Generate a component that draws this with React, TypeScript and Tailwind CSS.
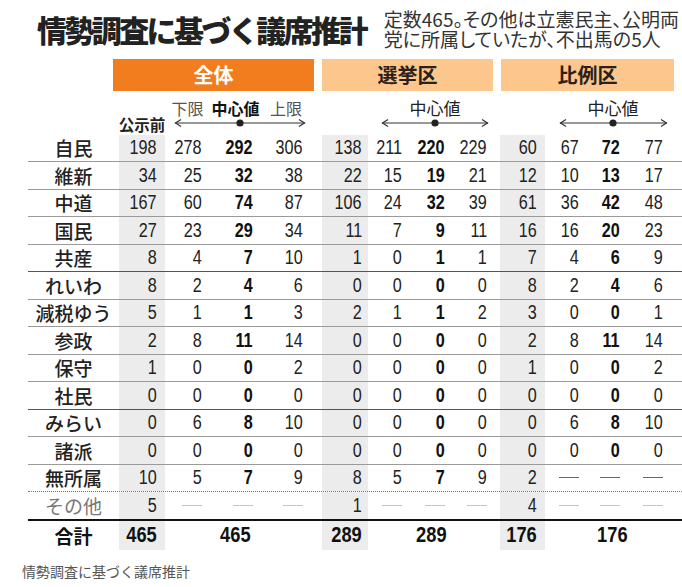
import React from "react";

type Cell = number | string;

const rows: { label: string; values: Cell[]; line: string }[] = [
  { label: "自民", values: [198, 278, 292, 306, 138, 211, 220, 229, 60, 67, 72, 77], line: "border-[#9a9a9a]" },
  { label: "維新", values: [34, 25, 32, 38, 22, 15, 19, 21, 12, 10, 13, 17], line: "border-[#9a9a9a]" },
  { label: "中道", values: [167, 60, 74, 87, 106, 24, 32, 39, 61, 36, 42, 48], line: "border-[#9a9a9a]" },
  { label: "国民", values: [27, 23, 29, 34, 11, 7, 9, 11, 16, 16, 20, 23], line: "border-[#9a9a9a]" },
  { label: "共産", values: [8, 4, 7, 10, 1, 0, 1, 1, 7, 4, 6, 9], line: "border-[#555]" },
  { label: "れいわ", values: [8, 2, 4, 6, 0, 0, 0, 0, 8, 2, 4, 6], line: "border-[#9a9a9a]" },
  { label: "減税ゆう", values: [5, 1, 1, 3, 2, 1, 1, 2, 3, 0, 0, 1], line: "border-[#9a9a9a]" },
  { label: "参政", values: [2, 8, 11, 14, 0, 0, 0, 0, 2, 8, 11, 14], line: "border-[#9a9a9a]" },
  { label: "保守", values: [1, 0, 0, 2, 0, 0, 0, 0, 1, 0, 0, 2], line: "border-[#9a9a9a]" },
  { label: "社民", values: [0, 0, 0, 0, 0, 0, 0, 0, 0, 0, 0, 0], line: "border-[#555]" },
  { label: "みらい", values: [0, 6, 8, 10, 0, 0, 0, 0, 0, 6, 8, 10], line: "border-[#9a9a9a]" },
  { label: "諸派", values: [0, 0, 0, 0, 0, 0, 0, 0, 0, 0, 0, 0], line: "border-[#9a9a9a]" },
  { label: "無所属", values: [10, 5, 7, 9, 8, 5, 7, 9, 2, "—", "—", "—"], line: "border-dotted border-[#777]" },
];

const other: Cell[] = [5, "—", "—", "—", 1, "—", "—", "—", 4, "—", "—", "—"];

const GRID =
  "grid grid-cols-[91px_46px_45px_51px_50px_11px_46px_42px_43px_42px_5px_45px_42px_41px_45px]";
const NUM = "font-['Liberation_Sans_Narrow','Liberation_Sans',Arial,sans-serif]";
const JP = "font-['Noto_Sans_CJK_JP','Noto_Sans',sans-serif]";

// right padding per value column
const pads = ["pr-2", "pr-2", "pr-2", "pr-2", "pr-[6px]", "pr-2", "pr-2", "pr-2", "pr-2", "pr-2", "pr-2", "pr-[10px]"];

const Dash = ({ light }: { light?: boolean }) => (
  <span className={`inline-block w-[20px] h-px ${light ? "bg-[#c4c4c4]" : "bg-[#666]"}`} />
);

const Num = ({ v, center }: { v: Cell; center?: boolean }) => (
  <span className={`inline-block scale-x-[0.83] ${center ? "origin-center" : "origin-right"} ${NUM}`}>{v}</span>
);

const ValueCell = ({ v, i, light }: { v: Cell; i: number; light?: boolean }) => {
  const gray = i % 4 === 0;
  const bold = i % 4 === 2;
  return (
    <div
      className={`flex items-center justify-end ${pads[i]} ${gray ? "bg-[#ececec]" : ""} ${
        bold ? "font-bold text-[#111]" : "text-[#222]"
      }`}
    >
      {v === "—" ? <Dash light={light} /> : <Num v={v} />}
    </div>
  );
};

const Arrow = ({ w, x1, x2, dot }: { w: number; x1: number; x2: number; dot: number }) => (
  <svg width={w} height={12} className="block">
    <line x1={x1} y1={6} x2={x2} y2={6} stroke="#333" strokeWidth={1.2} />
    <path d={`M${x1 + 6} 2.5 L${x1 + 0.5} 6 L${x1 + 6} 9.5`} fill="none" stroke="#333" strokeWidth={1.2} />
    <path d={`M${x2 - 6} 2.5 L${x2 - 0.5} 6 L${x2 - 6} 9.5`} fill="none" stroke="#333" strokeWidth={1.2} />
    <circle cx={dot} cy={6} r={3.6} fill="#222" />
  </svg>
);

export default function App() {
  return (
    <div className={`w-[682px] h-[587px] bg-white text-[#222] ${JP}`}>
      {/* title */}
      <div className="flex items-start pl-[37px] pt-[9px] h-[59px]">
        <h1 className="text-[30px] leading-[40px] tracking-[-2.6px] font-black text-[#222] whitespace-nowrap">
          情勢調査に基づく議席推計
        </h1>
        <p className="ml-[18px] text-[19px] leading-[20px] text-[#333] whitespace-nowrap [font-feature-settings:'palt']">
          定数465。その他は立憲民主、公明両
          <br />
          党に所属していたが、不出馬の5人
        </p>
      </div>

      <div className="pl-[28px]">
        {/* group bands */}
        <div className="flex ml-[85px] h-[32px] gap-[8px] text-[20px] font-bold">
          <div className="w-[201px] bg-[#f17d1e] text-white flex items-center justify-center">全体</div>
          <div className="w-[171px] bg-[#fcc68d] text-[#2a2118] flex items-center justify-center">選挙区</div>
          <div className="w-[173px] bg-[#fcc68d] text-[#2a2118] flex items-center justify-center">比例区</div>
        </div>

        {/* sub header */}
        <div className={`${GRID} h-[43.5px]`}>
          <div />
          <div className="flex items-end justify-center pb-[2px] text-[15.5px] leading-[18px] font-bold whitespace-nowrap">
            公示前
          </div>
          <div className="col-span-3 pt-[7px]">
            <div className="grid grid-cols-[45px_51px_50px] h-[20px] text-[16px] leading-[20px]">
              <span className="text-center text-[#555]">下限</span>
              <span className="text-center font-bold text-[#111]">中心値</span>
              <span className="text-center text-[#555]">上限</span>
            </div>
            <div className="-mt-[1px]">
              <Arrow w={146} x1={10} x2={140} dot={75} />
            </div>
          </div>
          <div />
          <div />
          <div className="col-span-3 pt-[7px]">
            <div className="h-[20px] text-[17px] leading-[20px] text-center pl-[7px] text-[#222]">中心値</div>
            <div className="-mt-[1px]">
              <Arrow w={127} x1={14} x2={120} dot={67} />
            </div>
          </div>
          <div />
          <div />
          <div className="col-span-3 pt-[7px]">
            <div className="h-[20px] text-[17px] leading-[20px] text-center pl-[8px] text-[#222]">中心値</div>
            <div className="-mt-[1px]">
              <Arrow w={128} x1={15} x2={122} dot={68} />
            </div>
          </div>
        </div>

        {/* data rows */}
        {rows.map((r) => (
          <div key={r.label} className={`${GRID} h-[27.5px] border-b ${r.line} text-[19.5px] leading-none`}>
            <div className="flex items-center justify-center text-[19px] font-medium text-[#222] whitespace-nowrap">
              {r.label}
            </div>
            {r.values.slice(0, 4).map((v, i) => (
              <ValueCell key={i} v={v} i={i} />
            ))}
            <div />
            {r.values.slice(4, 8).map((v, i) => (
              <ValueCell key={i + 4} v={v} i={i + 4} />
            ))}
            <div />
            {r.values.slice(8).map((v, i) => (
              <ValueCell key={i + 8} v={v} i={i + 8} />
            ))}
          </div>
        ))}

        {/* その他 */}
        <div className={`${GRID} h-[28.5px] border-b-2 border-[#111] text-[19.5px] leading-none`}>
          <div className="flex items-center justify-center text-[19px] text-[#777] whitespace-nowrap">その他</div>
          {other.slice(0, 4).map((v, i) => (
            <ValueCell key={i} v={v} i={i} light />
          ))}
          <div />
          {other.slice(4, 8).map((v, i) => (
            <ValueCell key={i + 4} v={v} i={i + 4} light />
          ))}
          <div />
          {other.slice(8).map((v, i) => (
            <ValueCell key={i + 8} v={v} i={i + 8} light />
          ))}
        </div>

        {/* 合計 */}
        <div className={`${GRID} h-[29px] leading-none font-bold text-[#111]`}>
          <div className="flex items-center justify-center text-[19px]">合計</div>
          <div className="flex items-center justify-end pr-2 bg-[#ececec] text-[22px]"><Num v={465} /></div>
          <div />
          <div className="flex items-center justify-center text-[22px]"><Num v={465} center /></div>
          <div />
          <div />
          <div className="flex items-center justify-end pr-[6px] bg-[#ececec] text-[22px]"><Num v={289} /></div>
          <div />
          <div className="flex items-center justify-center text-[22px]"><Num v={289} center /></div>
          <div />
          <div />
          <div className="flex items-center justify-end pr-2 bg-[#ececec] text-[22px]"><Num v={176} /></div>
          <div />
          <div className="flex items-center justify-center pl-[10px] text-[22px]"><Num v={176} center /></div>
          <div />
        </div>
      </div>

      <p className="mt-[11px] pl-[22px] text-[14px] leading-[20px] text-[#555]">情勢調査に基づく議席推計</p>
    </div>
  );
}
